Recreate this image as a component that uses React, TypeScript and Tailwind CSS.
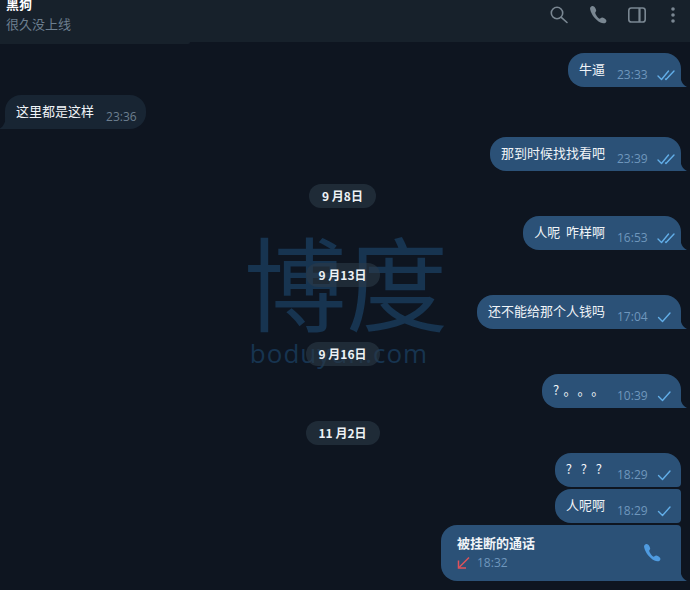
const cjk = "font-['Noto_Sans_CJK_SC','Noto_Sans',sans-serif]";

function Tail({ side }: { side: "left" | "right" }) {
  return side === "right" ? (
    <svg className="absolute bottom-0 right-[-6px] h-[12px] w-[7px]" viewBox="0 0 7 12">
      <path d="M0 0 C0.5 5 2.5 10 7 12 L0 12 Z" fill="#2b5177" />
    </svg>
  ) : (
    <svg className="absolute bottom-0 left-[-6px] h-[12px] w-[7px]" viewBox="0 0 7 12">
      <path d="M7 0 C6.5 5 4.5 10 0 12 L7 12 Z" fill="#182533" />
    </svg>
  );
}

function Check({ double, color = "#62aee8" }: { double?: boolean; color?: string }) {
  return (
    <svg className="h-[12px] w-[18px]" viewBox="0 0 18 12" fill="none" stroke={color} strokeWidth="1.4" strokeLinecap="round" strokeLinejoin="round">
      {double ? (
        <>
          <path d="M1 7 L4.5 10.5 L11.5 2" />
          <path d="M8.5 10 L9 10.5 L17 2" />
        </>
      ) : (
        <path d="M1.5 6.5 L5.5 10.5 L13 2" />
      )}
    </svg>
  );
}

function Out({ text, time, double, tail = true, corner = "rounded-[16px]", textClass = "" }: { text: string; time: string; double?: boolean; tail?: boolean; corner?: string; textClass?: string }) {
  return (
    <div className="flex justify-end pr-[9px]">
      <div className={`relative flex h-[34px] items-start bg-[#2b5177] pl-[11px] pr-[6px] ${corner}`}>
        <span className={`mt-[6px] text-[13px] leading-[19px] text-[#f0f4f8] whitespace-pre [text-spacing-trim:space-all] ${textClass}`}>{text}</span>
        <span className="ml-[12px] mt-[14px] w-[31px] text-[12px] leading-[16px] text-[#6f97bd] font-['Open_Sans',sans-serif]">{time}</span>
        <span className="ml-[9px] mt-[16px]"><Check double={double} /></span>
        {tail && <Tail side="right" />}
      </div>
    </div>
  );
}

function DatePill({ text, w }: { text: string; w: string }) {
  return (
    <div className="flex justify-center pr-[5px]">
      <div className={`flex h-[24px] items-center justify-center rounded-full bg-[#2b3a48]/60 text-[12px] font-bold text-[#eef2f5] ${w}`}>{text}</div>
    </div>
  );
}

export default function App() {
  return (
    <div className={`relative h-[590px] w-[690px] overflow-hidden bg-[#0e1520] ${cjk}`}>
      {/* watermark */}
      <div aria-hidden className="pointer-events-none absolute left-[244px] top-[219px] flex w-[204px] flex-col items-center text-[#173450]">
        <div className="whitespace-nowrap text-[102px] font-normal leading-[122px]">博度</div>
        <div className="mt-[-2px] mr-[14px] whitespace-nowrap text-[26px] leading-[28px] tracking-[1px] font-['Open_Sans',sans-serif]">boduyun.com</div>
      </div>

      {/* header */}
      <header className="relative flex h-[42px] items-start justify-between bg-[#17212b]">
        <div className="pl-[6px]">
          <div className="mt-[-5px] text-[13px] font-bold leading-[17px] text-white">黑狗</div>
          <div className="mt-[3px] text-[13px] leading-[18px] text-[#6d7f8f]">很久没上线</div>
        </div>
        <div className="flex items-center gap-[19px] pr-[14px] pt-[5px] text-[#7a8792]">
          <svg className="h-[20px] w-[20px]" viewBox="0 0 20 20" fill="none" stroke="currentColor" strokeWidth="1.6" strokeLinecap="round">
            <circle cx="8" cy="8" r="5.7" />
            <path d="M12.3 12.3 L18 17.5" />
          </svg>
          <svg className="h-[20px] w-[20px]" viewBox="0 0 20 20" fill="currentColor">
            <path d="M3.3 1.4 C2.2 2 1.8 3.2 2.2 4.6 C3.4 9.8 7.4 15 12.4 17.6 C14.2 18.5 16.4 18.6 17.6 17.8 C18.6 17 18.6 15.6 18 14.8 C17.2 13.8 15.4 12.8 14.2 12.6 C13.2 12.5 12.4 13.6 11.8 13.7 C10 13.2 7.8 10 7.2 8 C7.2 7.2 8.2 6.6 8.2 5.6 C8 4.4 7 2.4 6 1.6 C5.3 1 4.2 0.9 3.3 1.4 Z" />
          </svg>
          <svg className="h-[20px] w-[20px]" viewBox="0 0 20 20" fill="none" stroke="currentColor" strokeWidth="1.6">
            <rect x="1.8" y="3" width="16.4" height="14" rx="2.6" />
            <path d="M12.5 3 V17" strokeWidth="2.2" />
          </svg>
          <svg className="ml-[4px] h-[20px] w-[6px]" viewBox="0 0 6 20" fill="currentColor">
            <circle cx="3" cy="4" r="1.8" />
            <circle cx="3" cy="10" r="1.8" />
            <circle cx="3" cy="16" r="1.8" />
          </svg>
        </div>
      </header>
      <div className="h-[2px] w-[190px] rounded-br-[6px] bg-[#17212b]" />

      {/* messages */}
      <main className="relative flex flex-col pt-[9px]">
        <Out text="牛逼" time="23:33" double corner="rounded-[16px] rounded-br-[0px]" />
        <div className="mt-[8px] flex pl-[5px]">
          <div className="relative flex h-[34px] items-start rounded-[16px] rounded-bl-[0px] bg-[#182533] pl-[11px] pr-[9px]">
            <span className="mt-[6px] text-[13px] leading-[19px] text-[#f0f4f8]">这里都是这样</span>
            <span className="ml-[12px] mt-[14px] w-[31px] text-[12px] leading-[16px] text-[#6d7f8f] font-['Open_Sans',sans-serif]">23:36</span>
            <Tail side="left" />
          </div>
        </div>
        <div className="mt-[8px]"><Out text="那到时候找找看吧" time="23:39" double corner="rounded-[16px] rounded-br-[0px]" /></div>
        <div className="mt-[13px]"><DatePill text="9 月8日" w="w-[67px]" /></div>
        <div className="mt-[8px]"><Out text="人呢  咋样啊" time="16:53" double corner="rounded-[16px] rounded-br-[0px]" /></div>
        <div className="mt-[13px]"><DatePill text="9 月13日" w="w-[74px]" /></div>
        <div className="mt-[8px]"><Out text="还不能给那个人钱吗" time="17:04" corner="rounded-[16px] rounded-br-[0px]" /></div>
        <div className="mt-[13px]"><DatePill text="9 月16日" w="w-[74px]" /></div>
        <div className="mt-[8px]"><Out text="? 。。。" time="10:39" corner="rounded-[16px] rounded-br-[0px]" textClass="tracking-[0.8px]" /></div>
        <div className="mt-[13px]"><DatePill text="11 月2日" w="w-[74px]" /></div>
        <div className="mt-[8px]"><Out text="? ? ?" time="18:29" tail={false} corner="rounded-[16px] rounded-br-[4px]" textClass="tracking-[3px]" /></div>
        <div className="mt-[2px]"><Out text="人呢啊" time="18:29" tail={false} corner="rounded-l-[16px] rounded-r-[4px]" /></div>
        <div className="mt-[2px] flex justify-end pr-[9px]">
          <div className="relative flex h-[56px] w-[240px] items-center justify-between rounded-[16px] rounded-tr-[4px] rounded-br-[0px] bg-[#2b5177] pl-[16px] pr-[19px]">
            <div>
              <div className="mt-[-1px] text-[13px] font-bold leading-[16px] text-[#f0f4f8]">被挂断的通话</div>
              <div className="mt-[4px] flex items-center gap-[7px]">
                <svg className="h-[14px] w-[13px]" viewBox="0 0 13 14" fill="none" stroke="#e0525c" strokeWidth="1.5">
                  <path d="M12 1.5 L2 11.5" />
                  <path d="M1.5 4.5 V12 H9" />
                </svg>
                <span className="text-[12px] leading-[16px] text-[#6f97bd] font-['Open_Sans',sans-serif]">18:32</span>
              </div>
            </div>
            <svg className="h-[20px] w-[20px]" viewBox="0 0 20 20" fill="#4f9be0">
              <path d="M3.3 1.4 C2.2 2 1.8 3.2 2.2 4.6 C3.4 9.8 7.4 15 12.4 17.6 C14.2 18.5 16.4 18.6 17.6 17.8 C18.6 17 18.6 15.6 18 14.8 C17.2 13.8 15.4 12.8 14.2 12.6 C13.2 12.5 12.4 13.6 11.8 13.7 C10 13.2 7.8 10 7.2 8 C7.2 7.2 8.2 6.6 8.2 5.6 C8 4.4 7 2.4 6 1.6 C5.3 1 4.2 0.9 3.3 1.4 Z" />
            </svg>
            <Tail side="right" />
          </div>
        </div>
      </main>
    </div>
  );
}
